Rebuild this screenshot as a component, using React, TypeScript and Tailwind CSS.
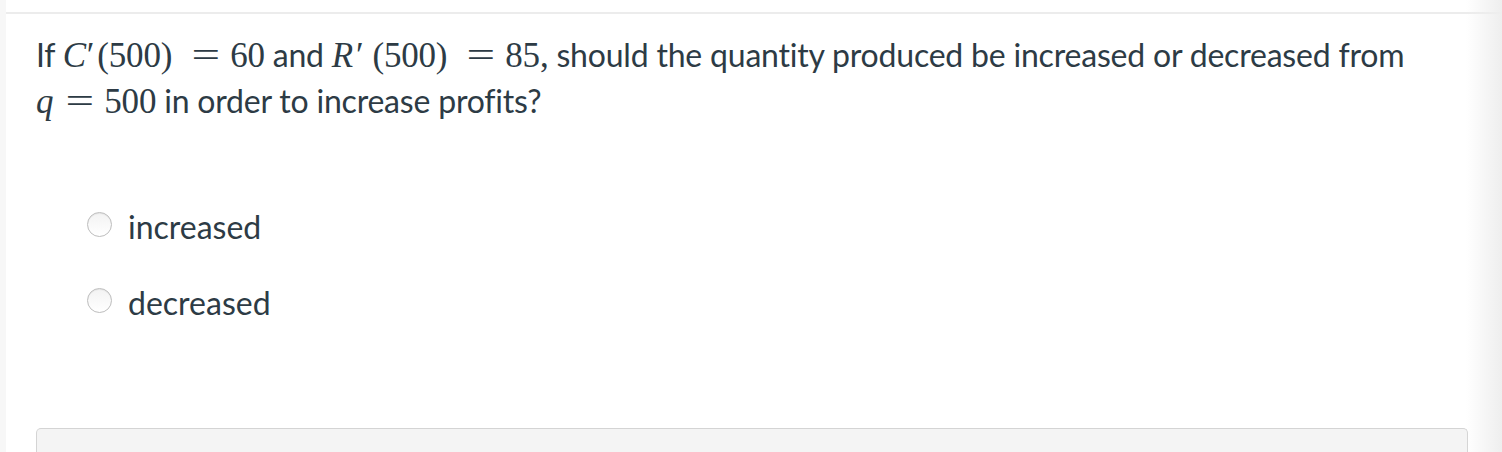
import React from "react";

const text = "text-[#2d3b45]";
const mathFont = { fontFamily: '"Liberation Serif", "DejaVu Serif", serif' };

function M({ children, italic }: { children: React.ReactNode; italic?: boolean }) {
  return (
    <span style={mathFont} className={`text-[35px] ${italic ? "italic" : ""}`}>
      {children}
    </span>
  );
}

function Eq({ tight }: { tight?: boolean }) {
  return (
    <span
      className={`${tight ? "ml-[12px]" : "ml-[19px]"} mr-[10px] inline-block w-[29px] text-center leading-none`}
    >
      <span style={mathFont} className="inline-block scale-x-[1.45] text-[35px]">
        =
      </span>
    </span>
  );
}

function Prime({ wide }: { wide?: boolean }) {
  return <span className={wide ? "mr-[9px] ml-[3px]" : "mr-[3px] ml-[1px]"}>′</span>;
}

function Radio({ label }: { label: string }) {
  return (
    <label className="flex items-center gap-[16px]">
      <span className="h-[25px] w-[25px] rounded-full border border-[#bdbdbd] bg-[linear-gradient(180deg,#f3f3f3,#ffffff)] shadow-[inset_0_1px_1px_rgba(0,0,0,0.06)]" />
      <span className="pt-[6px]">{label}</span>
    </label>
  );
}

export default function App() {
  return (
    <div
      className={`flex h-[452px] w-[1502px] overflow-hidden bg-white ${text}`}
      style={{ fontFamily: 'Lato, "Noto Sans", sans-serif' }}
    >
      <div className="w-[6px] shrink-0 bg-[#f7f7f7]" />
      <div className="relative flex min-w-0 flex-1 flex-col">
        <div className="mt-[12px] h-[2px] bg-[#ececec]" />
        <div className="pl-[30px] pt-[18px] text-[32px] leading-[45px] tracking-[-0.2px]">
          <p>
            If <M italic>C</M>
            <M>
              <Prime />
              (500)
            </M>
            <Eq />
            <M>60</M> and <M italic>R</M>
            <M>
              <Prime wide />
              (500)
            </M>
            <Eq />
            <M>85,</M> should the quantity produced be increased or decreased from
            <br />
            <M italic>q</M>
            <Eq tight />
            <M>500</M> in order to increase profits?
          </p>
        </div>
        <div className="flex flex-col gap-[40px] pl-[81px] pt-[82px] text-[32px] leading-[30px]">
          <Radio label="increased" />
          <Radio label="decreased" />
        </div>
        <div className="mr-[34px] ml-[30px] mt-auto h-[24px] rounded-t-[5px] border border-b-0 border-[#d4d4d4] bg-[#f4f4f4]" />
        <div className="pointer-events-none absolute inset-y-0 right-0 w-[36px] bg-[linear-gradient(90deg,rgba(240,240,240,0),#eeeeee)]" />
      </div>
    </div>
  );
}
